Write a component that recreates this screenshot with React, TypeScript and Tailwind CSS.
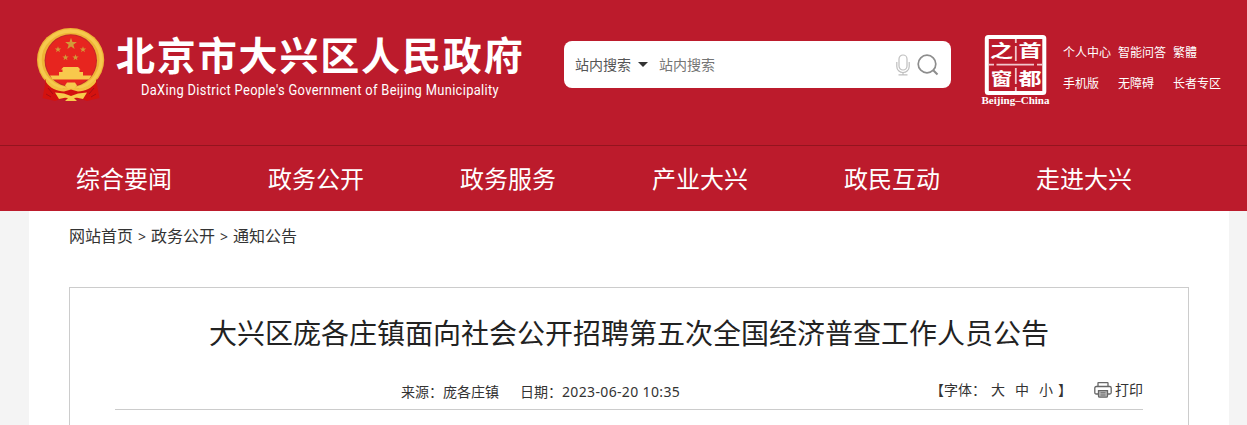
import React from 'react';

const navItems = ['综合要闻', '政务公开', '政务服务', '产业大兴', '政民互动', '走进大兴'];

const quickLinks = ['个人中心', '智能问答', '繁體', '手机版', '无障碍', '长者专区'];

const crumbs = ['网站首页', '政务公开', '通知公告'];

const STAR = '0,-1 0.235,-0.324 0.951,-0.309 0.38,0.124 0.588,0.809 0,0.4 -0.588,0.809 -0.38,0.124 -0.951,-0.309 -0.235,-0.324';

const stars = [
  { x: 34, y: 16, r: 6.2 },
  { x: 21, y: 21.5, r: 3.3 },
  { x: 46, y: 21.5, r: 3.3 },
  { x: 28.5, y: 29.5, r: 3.3 },
  { x: 38.5, y: 29.5, r: 3.3 }
];

const Emblem: React.FC = () => (
  <svg className="w-[68px] h-[74px] shrink-0" viewBox="0 0 68 74">
    {/* wheat ring */}
    <ellipse cx="33.6" cy="32" rx="33.6" ry="32" fill="#eeb435" />
    <ellipse cx="33.6" cy="32" rx="30.6" ry="29" fill="none" stroke="#f6c94e" strokeWidth="3.4" />
    <circle cx="33.8" cy="32.5" r="26.2" fill="#c3282a" />
    <circle cx="33.8" cy="32.5" r="25.2" fill="#e7251f" />
    {stars.map((s, i) => (
      <polygon key={i} points={STAR} transform={`translate(${s.x} ${s.y}) scale(${s.r})`} fill="#d29a38" />
    ))}
    {/* gate tower */}
    <path d="M26.5 39 H41 L43.5 41.5 H42.5 V44 H46 V47.5 H54.5 L52 51.5 H15.5 L13 47.5 H22 V44 H25.5 V41.5 H24 Z" fill="#f8c84c" />
    {/* drapes */}
    <path d="M8.5 51 C12 57 17 60.5 25 61 L34 60 L43 61 C51 60.5 56 57 59.5 51 L60 57 L62.5 70 L56 71.5 L50 73 L44 71 H24 L18 73 L12 71.5 L5.5 70 L8 57 Z" fill="#d3120f" />
    <path d="M11 60 L16 66 M9 66 L14 69 M57 60 L52 66 M59 66 L54 69" stroke="#a80d14" strokeWidth="1" />
    {/* lower edge of the wheat and the gear */}
    <path d="M9 50 C14 57 20 60 27 60.5 L30 58.5 H38 L41 60.5 C48 60 54 57 59 50 L59 54 C55 60 48 63.5 41 63.5 L34 61.5 L27 63.5 C20 63.5 13 60 9 54 Z" fill="#f3bf40" />
    <path d="M28 57.5 L30 54.5 H38 L40 57.5 L37 60.5 H31 Z" fill="#f6c94e" />
    {/* ribbon */}
    <path d="M18 64.5 L27 65.5 L34 68 L41 65.5 L50 64.5 L46 71 L40 69.8 L37 70 L40 73 H28 L31 70 L28 69.8 L22 71 Z" fill="#f7cb4b" />
    <path d="M28 64 L34 62.5 L40 64 L34 67 Z" fill="#d3120f" />
  </svg>
);

const CapitalWindow: React.FC = () => (
  <svg className="w-[72px] h-[74px]" viewBox="0 0 72 74">
    <rect x="5.8" y="3" width="57.5" height="56" rx="1.5" fill="none" stroke="#fff" strokeWidth="4" />
    <path d="M34.8 5 V9 M34.8 12 V27 M34.8 34 V50 M34.8 53 V57 M8 30.7 H13 M15.5 30.7 H53 M56 30.7 H61" stroke="#f1c7cc" strokeWidth="1.8" />
    <g fill="#fff" fontFamily="'Liberation Serif', 'Noto Sans CJK SC', serif" fontSize="24" fontWeight="700" textAnchor="middle">
      <text transform="translate(20.5 23.3) scale(.96 .7)">之</text>
      <text transform="translate(49 23.3) scale(.96 .7)">首</text>
      <text transform="translate(20.5 50.8) scale(.9 .72)">窗</text>
      <text transform="translate(49 50.8) scale(.96 .72)">都</text>
    </g>
    <text x="0.5" y="69.5" textLength="68" lengthAdjust="spacingAndGlyphs" fill="#fff" fontFamily="'Liberation Serif', serif" fontSize="9.5" fontWeight="700">Beijing–China</text>
  </svg>
);

const SearchBar: React.FC = () => (
  <div className="mt-[41px] ml-10 flex h-[47px] w-[387px] shrink-0 items-center rounded-lg bg-white pl-[11px] text-sm">
    <span className="text-[#555]">站内搜索</span>
    <svg className="ml-[7px] h-[5px] w-[10px]" viewBox="0 0 10 5">
      <path d="M0 0 H10 L5 5 Z" fill="#333" />
    </svg>
    <span className="ml-[11px] text-[#757575]">站内搜索</span>
    <svg className="ml-auto h-[22px] w-[14px]" viewBox="0 0 14 22" fill="none" stroke="#bfbfbf" strokeWidth="1.2">
      <rect x="3" y="1" width="8" height="15" rx="4" />
      <path d="M.8 8 V12.5 A6.2 6 0 0 0 13.2 12.5 V8 M7 18.5 V20.8 M2.5 20.8 H11.5" />
    </svg>
    <svg className="mr-3 ml-[7px] h-[22px] w-[22px]" viewBox="0 0 22 22" fill="none" stroke="#8d8d8d" strokeWidth="1.7">
      <circle cx="10" cy="10" r="8.8" />
      <path d="M16.2 16.2 L20.5 20.5" strokeWidth="2" />
    </svg>
  </div>
);

const Printer: React.FC = () => (
  <svg className="h-4 w-[18px]" viewBox="0 0 18 16" fill="none" stroke="#666" strokeWidth="1.3">
    <path d="M4 4.5 V1.2 Q4 .7 4.5 .7 H13.5 Q14 .7 14 1.2 V4.5" />
    <path d="M4 12 H2.3 Q.8 12 .8 10.5 V6 Q.8 4.5 2.3 4.5 H15.7 Q17.2 4.5 17.2 6 V10.5 Q17.2 12 15.7 12 H14" />
    <path d="M4.5 8.7 H13.5 V14 Q13.5 15.2 12.3 15.2 H5.7 Q4.5 15.2 4.5 14 Z" fill="#bbb" />
    <path d="M6.5 10.8 H11.5 M6.5 13 H11.5" strokeWidth="1" />
  </svg>
);

const Header: React.FC = () => (
  <header className="bg-[#bc1b2c] text-white">
    <div className="flex h-[145px] items-start pl-[37px]">
      <div className="flex pt-7">
        <Emblem />
        <div className="ml-[11px] w-[408px]">
          <h1 className="mt-[6px] h-[42px] text-[39px] leading-[42px] font-bold tracking-[1.85px] whitespace-nowrap">北京市大兴区人民政府</h1>
          <p className="mt-[4px] ml-[25px] origin-left scale-x-[0.92] font-[Roboto] text-sm leading-5 tracking-[0.36px] whitespace-nowrap">DaXing District People's Government of Beijing Municipality</p>
        </div>
      </div>
      <SearchBar />
      <div className="mt-[34px] ml-[30px]">
        <CapitalWindow />
      </div>
      <div className="mt-[37px] ml-[10px] grid grid-cols-[55px_55px_55px] text-xs leading-[31px] whitespace-nowrap">
        {quickLinks.map((t) => (
          <a key={t}>{t}</a>
        ))}
      </div>
    </div>
    <nav className="flex h-[66px] border-t border-[#94141f] pl-7 text-2xl leading-[66px]">
      {navItems.map((t) => (
        <a key={t} className="w-48 text-center">{t}</a>
      ))}
    </nav>
  </header>
);

const App: React.FC = () => {
  return (
    <div className="h-[425px] w-[1247px] overflow-hidden bg-[#f4f4f4] font-['Noto_Sans','Noto_Sans_CJK_SC',sans-serif] text-[#333]">
      <Header />
      <main className="ml-[29px] h-[214px] w-[1200px] bg-white px-10">
        <div className="flex h-[76px] gap-[5px] leading-[51px]">
          {crumbs.map((c, i) => (
            <React.Fragment key={c}>
              {i > 0 && <span className="w-2 text-sm leading-[51px]">&gt;</span>}
              <a>{c}</a>
            </React.Fragment>
          ))}
        </div>
        <article className="h-[138px] border border-b-0 border-[#ccc] px-[45px]">
          <h2 className="mt-[24px] text-center text-[28px] leading-[42px] text-[#222]">大兴区庞各庄镇面向社会公开招聘第五次全国经济普查工作人员公告</h2>
          <div className="mt-[22px] flex h-[34px] border-b border-[#ccc] text-sm leading-7 whitespace-nowrap">
            <span className="mt-[2px] ml-[286px]">来源：庞各庄镇</span>
            <span className="mt-[2px] ml-[21px]">
              日期：<span className="tracking-[0.35px]">2023-06-20 10:35</span>
            </span>
            <div className="ml-auto flex">
              <span>【字体：</span>
              <span className="ml-[5px]">大</span>
              <span className="ml-[10px]">中</span>
              <span className="ml-[10px]">小</span>
              <span className="ml-[5px]">】</span>
            </div>
            <div className="ml-[22px] flex h-7 items-center gap-[3px]">
              <Printer />
              <span>打印</span>
            </div>
          </div>
        </article>
      </main>
    </div>
  );
};

export default App;
